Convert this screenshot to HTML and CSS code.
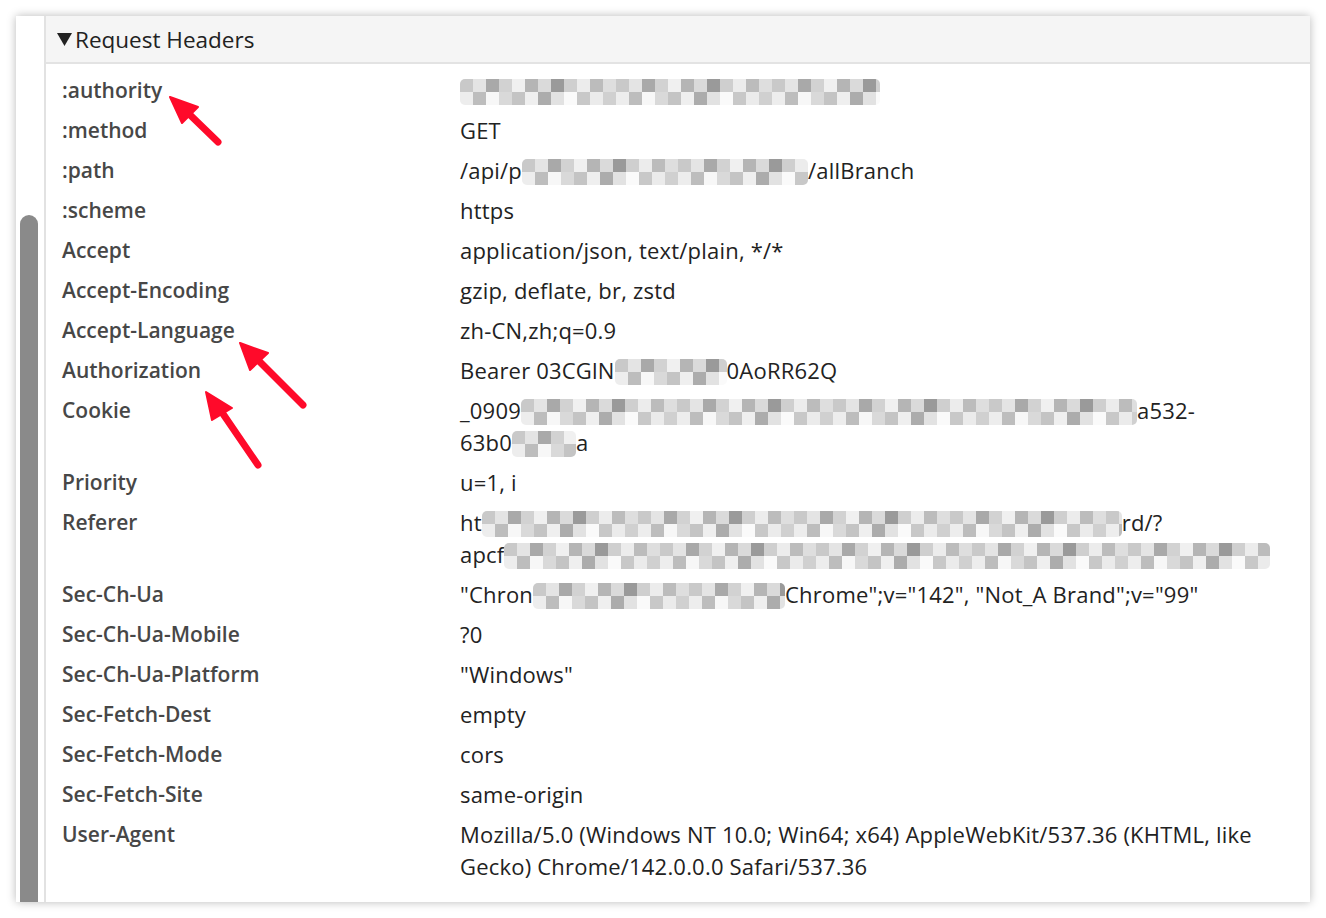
FILE: index.html
```html
<!DOCTYPE html>
<html lang="en">
<head>
    <meta charset="UTF-8">
    <title>Request Headers</title>
    <link rel="stylesheet" href="styles.css">
</head>
<body>

    <div class="window">
        <div class="gutter">
            <div class="thumb"></div>
        </div>

        <div class="panel">
            <div class="panel-head">
                <svg class="caret" width="15" height="13" viewBox="0 0 15 13"><polygon points="0,0 15,0 7.5,13" fill="#222"/></svg>
                <span>Request Headers</span>
            </div>

            <div class="rows">
                <div class="row"><div class="name">:authority</div><div class="value"><span class="blur" style="width:420px"></span></div></div>
                <div class="row"><div class="name">:method</div><div class="value">GET</div></div>
                <div class="row"><div class="name">:path</div><div class="value">/api/p<span class="blur" style="width:286px"></span>/allBranch</div></div>
                <div class="row"><div class="name">:scheme</div><div class="value">https</div></div>
                <div class="row"><div class="name">Accept</div><div class="value">application/json, text/plain, */*</div></div>
                <div class="row"><div class="name">Accept-Encoding</div><div class="value">gzip, deflate, br, zstd</div></div>
                <div class="row"><div class="name">Accept-Language</div><div class="value">zh-CN,zh;q=0.9</div></div>
                <div class="row"><div class="name">Authorization</div><div class="value">Bearer 03CGlN<span class="blur" style="width:112px"></span>0AoRR62Q</div></div>
                <div class="row"><div class="name">Cookie</div><div class="value">_0909<span class="blur" style="width:616px"></span>a532-<br>63b0<span class="blur" style="width:64px"></span>a</div></div>
                <div class="row"><div class="name">Priority</div><div class="value">u=1, i</div></div>
                <div class="row"><div class="name">Referer</div><div class="value">ht<span class="blur" style="width:640px"></span>rd/?<br>apcf<span class="blur" style="width:766px"></span></div></div>
                <div class="row"><div class="name">Sec-Ch-Ua</div><div class="value">"Chron<span class="blur" style="width:252px"></span>Chrome";v="142", "Not_A Brand";v="99"</div></div>
                <div class="row"><div class="name">Sec-Ch-Ua-Mobile</div><div class="value">?0</div></div>
                <div class="row"><div class="name">Sec-Ch-Ua-Platform</div><div class="value">"Windows"</div></div>
                <div class="row"><div class="name">Sec-Fetch-Dest</div><div class="value">empty</div></div>
                <div class="row"><div class="name">Sec-Fetch-Mode</div><div class="value">cors</div></div>
                <div class="row"><div class="name">Sec-Fetch-Site</div><div class="value">same-origin</div></div>
                <div class="row"><div class="name">User-Agent</div><div class="value">Mozilla/5.0 (Windows NT 10.0; Win64; x64) AppleWebKit/537.36 (KHTML, like Gecko) Chrome/142.0.0.0 Safari/537.36</div></div>
            </div>
        </div>
    </div>

    <!-- annotation arrows drawn over the screenshot -->
    <svg class="arrows" width="1326" height="918" viewBox="0 0 1326 918">
        <g stroke="#ff0a2a" stroke-width="7" stroke-linecap="round" fill="#ff0a2a">
            <line x1="218" y1="142" x2="186" y2="111"/>
            <polygon points="170,97 198,107 182,123" stroke-width="2" stroke-linejoin="round"/>

            <line x1="303" y1="405" x2="256" y2="358"/>
            <polygon points="240,343 268,353 250,370" stroke-width="2" stroke-linejoin="round"/>

            <line x1="258" y1="465" x2="219" y2="408"/>
            <polygon points="206,392 232,408 212,420" stroke-width="2" stroke-linejoin="round"/>
        </g>
    </svg>

</body>
</html>
```

FILE: styles.css
```css
body {
    margin: 0;
    background-color: #ffffff;
    font-family: "Open Sans", "Noto Sans", sans-serif;
    position: relative;
    width: 1326px;
    height: 918px;
    overflow: hidden;
}

.window {
    margin: 16px;
    width: 1294px;
    height: 886px;
    display: flex;
    background-color: #ffffff;
    box-shadow: 0 0 9px rgba(0, 0, 0, 0.28);
    overflow: hidden;
}

.gutter {
    width: 30px;
    flex-shrink: 0;
    border-right: 2px solid #e2e2e2;
    padding-top: 199px;
    box-sizing: border-box;
}

.thumb {
    margin-left: 4px;
    width: 18px;
    height: 700px;
    background-color: #8a8a8a;
    border-radius: 9px 9px 0 0;
}

.panel {
    flex: 1;
}

.panel-head {
    height: 46px;
    background-color: #f5f5f5;
    border-bottom: 2px solid #e3e3e3;
    display: flex;
    align-items: center;
    gap: 3px;
    padding-left: 11px;
    font-size: 22.5px;
    color: #222;
}

.caret {
    margin-top: 1px;
}

.rows {
    padding-top: 6px;
}

.row {
    display: flex;
    padding: 4px 0;
    line-height: 32px;
}

.name {
    width: 414px;
    flex-shrink: 0;
    padding-left: 16px;
    box-sizing: border-box;
    font-size: 21px;
    font-weight: 600;
    color: #474747;
}

.value {
    flex: 1;
    padding-right: 14px;
    font-size: 22px;
    letter-spacing: 0.2px;
    color: #222;
}

.blur {
    display: inline-block;
    height: 26px;
    vertical-align: -6px;
    border-radius: 5px;
    background-image:
        linear-gradient(90deg, #c9c9c9 0 13px, #e4e4e4 13px 26px, #a9a9a9 26px 39px, #d2d2d2 39px 52px, #f0f0f0 52px 65px, #b5b5b5 65px 78px, #dadada 78px 91px, #9a9a9a 91px 104px, #cfcfcf 104px 117px, #ececec 117px 130px, #bcbcbc 130px 143px, #dedede 143px 156px),
        linear-gradient(90deg, #ededed 0 13px, #bdbdbd 13px 26px, #f7f7f7 26px 39px, #d9d9d9 39px 52px, #c4c4c4 52px 65px, #efefef 65px 78px, #acacac 78px 91px, #e2e2e2 91px 104px, #fafafa 104px 117px, #c8c8c8 117px 130px, #ebebeb 130px 143px, #d0d0d0 143px 156px);
    background-size: 156px 13px, 156px 13px;
    background-position: 0 0, 0 13px;
    background-repeat: repeat-x;
}

.arrows {
    position: absolute;
    top: 0;
    left: 0;
    pointer-events: none;
}
```
